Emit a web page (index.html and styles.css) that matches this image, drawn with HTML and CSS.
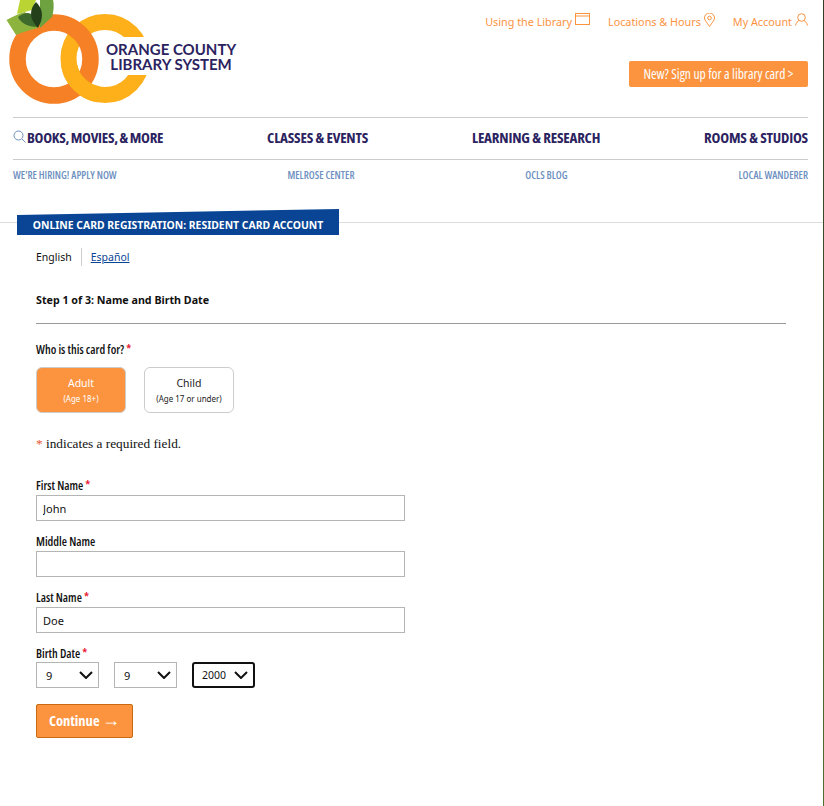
FILE: index.html
```html
<!DOCTYPE html>
<html lang="en">
<head>
    <meta charset="UTF-8">
    <meta name="viewport" content="width=device-width, initial-scale=1.0">
    <title>Online Card Registration</title>
    <link rel="stylesheet" href="styles.css">
</head>
<body>
    <header class="site-header">
        <div class="top-row">
            <a class="logo" href="#">
                <svg class="logo-mark" width="150" height="106" viewBox="0 0 150 106">
                    <circle cx="105" cy="58.500" r="36.500" fill="none" stroke="#fdb01a" stroke-width="16"/>
                    <rect x="118" y="37" width="32" height="38" fill="#fff"/>
                    <circle cx="54" cy="59" r="36.500" fill="none" stroke="#f58025" stroke-width="16.500"/>
                    <path d="M98.700 94.400A36.500 36.500 0 0 1 69 64.800" fill="none" stroke="#fdb01a" stroke-width="16"/>
                    <path d="M20 0h16l-4 10-15 4z" fill="#b9d433"/>
                    <path d="M6.500 20C14 16 20 13 25 12l13 16c-8 2-16 4-22 7z" fill="#8db33f"/>
                    <path d="M40 0h13c1 4 1 10-1 17L40 28z" fill="#6ea140"/>
                    <path d="M18 17c5-4 10-5 13-3l7 13c-8 0-17-3-20-10z" fill="#3e6b2c"/>
                    <path d="M36 2c4 4 6 8 6 13 0 5-2 9-4 13-3-4-7-8-7-14 0-5 2-9 5-12z" fill="#24401a"/>
                </svg>
                <span class="logo-text">ORANGE COUNTY<br>LIBRARY SYSTEM</span>
            </a>
            <div class="top-right">
                <nav class="util-links">
                    <a href="#">Using the Library
                        <svg width="15" height="12" viewBox="0 0 15 12" fill="none" stroke="#fb933f"><rect x=".5" y=".5" width="14" height="11"/><path d="M.5 3h14"/></svg>
                    </a>
                    <a href="#">Locations &amp; Hours
                        <svg width="11" height="14" viewBox="0 0 11 14" fill="none" stroke="#fb933f"><path d="M5.500 13.500C3 9.500 .5 7.500 .5 5a5 5 0 0 1 10 0c0 2.500-2.500 4.500-5 8.500z"/><circle cx="5.500" cy="5" r="1.800"/></svg>
                    </a>
                    <a href="#">My Account
                        <svg width="13" height="13" viewBox="0 0 13 13" fill="none" stroke="#fb933f"><circle cx="6.500" cy="4.500" r="3.800"/><path d="M.5 12.500c.6-3 2.500-4.500 3.500-5M12.500 12.500c-.6-3-2.500-4.500-3.500-5"/></svg>
                    </a>
                </nav>
                <a class="signup-btn" href="#">New? Sign up for a library card &gt;</a>
            </div>
        </div>

        <nav class="main-nav">
            <a href="#" class="search-link">
                <svg width="13" height="13" viewBox="0 0 13 13" fill="none" stroke="#6d8fc0"><circle cx="5.500" cy="5.500" r="4.500"/><path d="M9 9l3.500 3.500"/></svg>
                BOOKS, MOVIES, &amp; MORE
            </a>
            <a href="#">CLASSES &amp; EVENTS</a>
            <a href="#">LEARNING &amp; RESEARCH</a>
            <a href="#">ROOMS &amp; STUDIOS</a>
        </nav>

        <nav class="sub-nav">
            <a href="#">WE'RE HIRING! APPLY NOW</a>
            <a href="#">MELROSE CENTER</a>
            <a href="#">OCLS BLOG</a>
            <a href="#">LOCAL WANDERER</a>
        </nav>
    </header>

    <div class="banner-row">
        <h1 class="banner">ONLINE CARD REGISTRATION: RESIDENT CARD ACCOUNT</h1>
    </div>

    <main class="content">
        <div class="lang-switch">
            <span class="lang-current">English</span>
            <a href="#">Español</a>
        </div>

        <h2 class="step-title">Step 1 of 3: Name and Birth Date</h2>

        <p class="field-label">Who is this card for?<span class="req">*</span></p>
        <div class="card-types">
            <button type="button" class="card-type active">Adult<small>(Age 18+)</small></button>
            <button type="button" class="card-type">Child<small>(Age 17 or under)</small></button>
        </div>

        <p class="req-note"><span class="req-note-star">*</span> indicates a required field.</p>

        <form class="reg-form">
            <label class="field-label" for="first_name">First Name<span class="req">*</span></label>
            <input class="text-input" type="text" id="first_name" value="John">

            <label class="field-label" for="middle_name">Middle Name</label>
            <input class="text-input" type="text" id="middle_name">

            <label class="field-label" for="last_name">Last Name<span class="req">*</span></label>
            <input class="text-input" type="text" id="last_name" value="Doe">

            <span class="field-label date-label">Birth Date<span class="req">*</span></span>
            <div class="date-row">
                <div class="date-select">9<svg width="14" height="8" viewBox="0 0 14 8" fill="none" stroke="#111" stroke-width="2"><path d="M1 1l6 6 6-6"/></svg></div>
                <div class="date-select">9<svg width="14" height="8" viewBox="0 0 14 8" fill="none" stroke="#111" stroke-width="2"><path d="M1 1l6 6 6-6"/></svg></div>
                <div class="date-select focused">2000<svg width="14" height="8" viewBox="0 0 14 8" fill="none" stroke="#111" stroke-width="2"><path d="M1 1l6 6 6-6"/></svg></div>
            </div>

            <button type="button" class="continue-btn">Continue <span class="arrow">→</span></button>
        </form>
    </main>
</body>
</html>
```
FILE: styles.css
```css
body {
    margin: 0;
    min-height: 100vh;
    padding-right: 1px;
    background: #fff linear-gradient(#2f3d25, #4e6e2e) right / 1px 100% no-repeat;
    color: #111;
    font-family: "Noto Sans", Arial, sans-serif;
    font-size: 12px;
}
a {
    text-decoration: none;
}
.site-header {
    padding: 0 15px 0 13px;
}
.top-row {
    display: flex;
    justify-content: space-between;
    height: 117px;
}
.logo {
    display: flex;
    align-items: flex-start;
    margin-left: -13px;
}
.logo-mark {
    flex-shrink: 0;
}
.logo-text {
    margin: 42px 0 0 -44px;
    position: relative;
    color: #2b2360;
    font-family: "Lato", sans-serif;
    font-size: 15px;
    font-weight: bold;
    line-height: 15px;
    text-align: center;
}
.top-right {
    display: flex;
    flex-direction: column;
    align-items: flex-end;
}
.util-links {
    display: flex;
    gap: 18px;
    margin-top: 13px;
}
.util-links a {
    color: #fb933f;
    font-size: 10.800px;
    line-height: 17px;
    display: flex;
    gap: 3px;
    align-items: flex-start;
}
.signup-btn {
    margin-top: 31px;
    width: 179px;
    height: 26px;
    line-height: 26px;
    text-align: center;
    background-color: #fb933f;
    border-radius: 2px;
    color: #fff;
    font-family: "Open Sans", sans-serif;
    font-stretch: 75%;
    font-size: 13.500px;
}
.main-nav {
    display: flex;
    justify-content: space-between;
    align-items: center;
    height: 37px;
    padding-bottom: 4px;
    border-top: 1px solid #ccc;
    border-bottom: 1px solid #ccc;
}
.main-nav a {
    color: #2b2360;
    font-family: "Open Sans", sans-serif;
    font-stretch: 75%;
    font-size: 15px;
    font-weight: bold;
    letter-spacing: -.2px;
}
.main-nav .search-link {
    display: flex;
    align-items: center;
    gap: 1px;
    letter-spacing: -.3px;
    word-spacing: -.5px;
}
.sub-nav {
    display: flex;
    justify-content: space-between;
    padding-top: 9px;
}
.sub-nav a {
    color: #6d8fc0;
    font-family: "Open Sans", sans-serif;
    font-stretch: 75%;
    font-size: 10.500px;
    font-weight: 600;
    line-height: 13px;
}
.banner-row {
    margin-top: 27px;
    height: 26px;
    padding-left: 17px;
    background: linear-gradient(#ddd, #ddd) 0 13px / 100% 1px no-repeat;
}
.banner {
    margin: 0;
    width: 322px;
    height: 26px;
    box-sizing: border-box;
    padding-top: 10px;
    background-color: #094594;
    clip-path: polygon(0 6px, 100% 0, 100% 100%, 0 100%);
    color: #fff;
    font-family: "Noto Sans", sans-serif;
    font-size: 10.400px;
    font-weight: bold;
    line-height: 13px;
    text-align: center;
    white-space: nowrap;
}
.content {
    padding: 0 37px 0 36px;
}
.lang-switch {
    display: flex;
    margin-top: 13px;
    height: 18px;
    align-items: center;
    font-size: 10.500px;
}
.lang-current {
    padding-right: 9px;
    border-right: 1px solid #ccc;
    line-height: 18px;
}
.lang-switch a {
    margin-left: 9px;
    color: #094594;
    text-decoration: underline;
}
.step-title {
    margin: 26px 0 0;
    padding-bottom: 15px;
    border-bottom: 1px solid #999;
    font-size: 10.700px;
    font-weight: bold;
    line-height: 16px;
}
.field-label {
    display: block;
    margin: 0;
    font-family: "Open Sans", sans-serif;
    font-stretch: 75%;
    font-size: 12px;
    font-weight: 600;
    line-height: 14px;
}
.content > .field-label {
    margin-top: 19px;
}
.req {
    margin-left: 2px;
    color: #e8112d;
}
.card-types {
    display: flex;
    gap: 18px;
    margin-top: 10px;
}
.card-type {
    width: 90px;
    height: 46px;
    padding: 0;
    background-color: #fff;
    border: 1px solid #ccc;
    border-radius: 6px;
    color: #222;
    font-family: "Noto Sans", sans-serif;
    font-size: 10.500px;
    line-height: 17px;
}
.card-type small {
    display: block;
    font-size: 8px;
    line-height: 14px;
}
.card-type.active {
    background-color: #fb933f;
    color: #fff;
}
.req-note {
    margin: 23px 0 0;
    font-family: "Liberation Serif", serif;
    font-size: 13.300px;
    line-height: 16px;
}
.req-note-star {
    color: #e8552d;
}
.reg-form {
    margin-top: 27px;
    width: 369px;
}
.reg-form .field-label {
    margin-bottom: 2px;
}
.reg-form .date-label {
    margin-bottom: 1px;
}
.text-input {
    display: block;
    box-sizing: border-box;
    width: 100%;
    height: 26px;
    margin-bottom: 14px;
    padding: 0 6px;
    border: 1px solid #b5b5b5;
    border-radius: 0;
    color: #111;
    font-family: "Noto Sans", sans-serif;
    font-size: 11px;
}
.date-row {
    display: flex;
    gap: 15px;
}
.date-select {
    box-sizing: border-box;
    width: 63px;
    height: 26px;
    padding: 0 5px 0 9px;
    display: flex;
    align-items: center;
    justify-content: space-between;
    border: 1px solid #b5b5b5;
    font-size: 11px;
}
.date-select.focused {
    border: 2px solid #111;
    border-radius: 3px;
    padding: 0 5px 0 8px;
    font-size: 10.500px;
}
.continue-btn {
    display: block;
    margin-top: 16px;
    width: 97px;
    height: 34px;
    padding: 0 0 2px;
    background-color: #fb933f;
    border: 1px solid #c96a10;
    border-radius: 2px;
    color: #fff;
    font-family: "Open Sans", sans-serif;
    font-stretch: 75%;
    font-size: 14.500px;
    font-weight: bold;
}
.arrow {
    font-size: 18px;
    font-weight: normal;
    line-height: 0;
}
```
